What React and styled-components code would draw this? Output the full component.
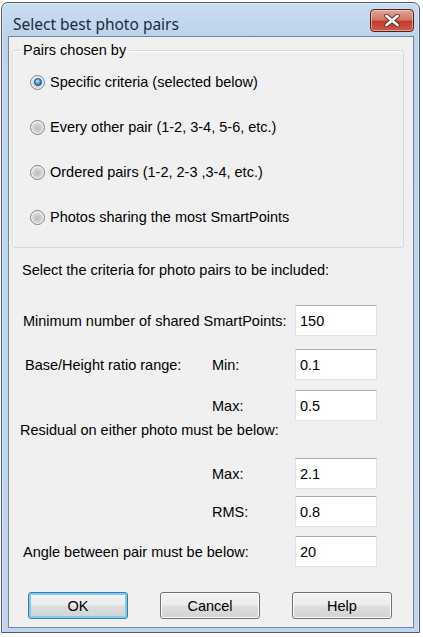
import React from 'react';
import styled, { createGlobalStyle } from 'styled-components';

const GlobalStyle = createGlobalStyle`
    html, body {
        margin: 0;
        padding: 0;
        background: #ffffff;
    }
    body {
        font-family: 'Liberation Sans', Arial, sans-serif;
        font-size: 14.5px;
        color: #000;
    }
`;

export default function App() {

    const choices = [
        'Specific criteria (selected below)',
        'Every other pair (1-2, 3-4, 5-6, etc.)',
        'Ordered pairs (1-2, 2-3 ,3-4, etc.)',
        'Photos sharing the most SmartPoints',
    ];

    return (
        <>
            <GlobalStyle />
            <Window>
                <TitleBar>
                    <Title>Select best photo pairs</Title>
                    <CloseButton>
                        <svg width="20" height="13" viewBox="0 0 20 13">
                            <path d="M4.5 2 L15.5 11 M15.5 2 L4.5 11" stroke="#5a2a24" strokeWidth="4.6" strokeLinecap="round" />
                            <path d="M4.5 2 L15.5 11 M15.5 2 L4.5 11" stroke="#ffffff" strokeWidth="2.8" strokeLinecap="round" />
                        </svg>
                    </CloseButton>
                </TitleBar>
                <Client>
                    <GroupBox>
                        <Legend>Pairs chosen by</Legend>
                        {choices.map((c, i) => (
                            <RadioRow key={c}>
                                <Radio $checked={i === 0} />
                                <span>{c}</span>
                            </RadioRow>
                        ))}
                    </GroupBox>

                    <Caption>Select the criteria for photo pairs to be included:</Caption>

                    <FormRow $top={27}>
                        <Label $span>Minimum number of shared SmartPoints:</Label>
                        <Field defaultValue="150" />
                    </FormRow>
                    <FormRow $top={14}>
                        <Label $indent={2}>Base/Height ratio range:</Label>
                        <Label>Min:</Label>
                        <Field defaultValue="0.1" />
                    </FormRow>
                    <FormRow $top={11}>
                        <span />
                        <Label>Max:</Label>
                        <Field defaultValue="0.5" />
                    </FormRow>

                    <SubCaption>Residual on either photo must be below:</SubCaption>

                    <FormRow $top={20}>
                        <span />
                        <Label>Max:</Label>
                        <Field defaultValue="2.1" />
                    </FormRow>
                    <FormRow $top={8}>
                        <span />
                        <Label>RMS:</Label>
                        <Field defaultValue="0.8" />
                    </FormRow>
                    <FormRow $top={10}>
                        <Label $span>Angle between pair must be below:</Label>
                        <Field defaultValue="20" />
                    </FormRow>

                    <ButtonBar>
                        <Button $default>OK</Button>
                        <Button>Cancel</Button>
                        <Button>Help</Button>
                    </ButtonBar>
                </Client>
            </Window>
        </>
    );
}

const Window = styled.div`
    margin: 2px 0 0 1px;
    width: 419px;
    height: 631px;
    box-sizing: border-box;
    border: 1px solid #4f5966;
    border-radius: 7px 7px 0 0;
    background: linear-gradient(#cadcf0 0px, #bcd3eb 34px, #c1d6ed 100%);
    box-shadow: inset 0 1px 0 #e4eef9, inset 1px 0 0 #dbe7f5, inset -1px 0 0 #dbe7f5;
    display: flex;
    flex-direction: column;
`;

const TitleBar = styled.div`
    height: 33px;
    flex: none;
    display: flex;
    justify-content: space-between;
    align-items: flex-start;
`;

const Title = styled.div`
    padding: 11px 0 0 11px;
    font-family: 'Noto Sans', 'Open Sans', sans-serif;
    font-size: 15.5px;
    line-height: 20px;
    color: #1b2a3e;
`;

const CloseButton = styled.div`
    margin: 6px 5px 0 0;
    width: 44px;
    height: 23px;
    box-sizing: border-box;
    border: 1px solid #50231e;
    border-radius: 4px;
    background: linear-gradient(#e3a293 0%, #d47a68 45%, #bf3e2d 55%, #cc5a44 100%);
    box-shadow: inset 0 0 0 1px rgba(255, 220, 210, 0.55);
    display: flex;
    align-items: center;
    justify-content: center;
`;

const Client = styled.div`
    flex: 1;
    margin: 0 5px 4px 6px;
    border: 1px solid #73849a;
    background: #f0f0f0;
    display: flex;
    flex-direction: column;
    align-items: flex-start;
`;

const GroupBox = styled.fieldset`
    margin: 5px 0 0 3px;
    padding: 13px 0 19px 17px;
    width: 392px;
    box-sizing: border-box;
    border: 1px solid #cfd9df;
    border-radius: 3px;
    box-shadow: inset 1px 1px 0 #ffffff;
    display: flex;
    flex-direction: column;
    gap: 23px;
    min-width: 0;
`;

const Legend = styled.legend`
    margin-left: -10px;
    padding: 0 3px;
    line-height: 16px;
    font-size: 14.5px;
`;

const RadioRow = styled.label`
    display: flex;
    align-items: center;
    gap: 5px;
    height: 22px;
    line-height: 16px;
`;

const Radio = styled.span`
    width: 15px;
    height: 15px;
    box-sizing: border-box;
    border-radius: 50%;
    border: 1px solid #7d8083;
    background: radial-gradient(circle at 50% 55%, #b9bcc0 0%, #d2d4d6 45%, #ececec 70%, #f8f8f8 100%);
    box-shadow: inset 0 0 0 1px #f2f2f2;
    flex: none;
    display: flex;
    align-items: center;
    justify-content: center;

    &::after {
        content: '';
        display: ${p => (p.$checked ? 'block' : 'none')};
        width: 8px;
        height: 8px;
        box-sizing: border-box;
        border-radius: 50%;
        border: 1px solid #1d4f8c;
        background: radial-gradient(circle at 40% 35%, #c4ecff 0%, #4aa3e6 45%, #1c5aa3 100%);
    }
`;

const Caption = styled.div`
    margin: 14px 0 0 13px;
    line-height: 16px;
`;

const SubCaption = styled.div`
    margin: 2px 0 0 11px;
    line-height: 16px;
`;

const FormRow = styled.div`
    margin: ${p => p.$top}px 0 0 14px;
    height: 30px;
    display: grid;
    grid-template-columns: 189px 83px 82px;
    align-items: center;
`;

const Label = styled.span`
    grid-column: ${p => (p.$span ? 'span 2' : 'auto')};
    padding-left: ${p => p.$indent || 0}px;
    line-height: 16px;
    white-space: nowrap;
`;

const Field = styled.input`
    grid-column: 3;
    width: 82px;
    height: 31px;
    box-sizing: border-box;
    padding: 0 4px;
    border: 1px solid #dfe3e8;
    border-top-color: #abadb3;
    background: #ffffff;
    font-family: 'Liberation Sans', Arial, sans-serif;
    font-size: 14.5px;
    color: #000;
    outline: none;
`;

const ButtonBar = styled.div`
    margin: 26px 0 0 19px;
    display: flex;
    gap: 32px;
`;

const Button = styled.button`
    width: 100px;
    height: 27px;
    box-sizing: border-box;
    border: 1px solid ${p => (p.$default ? '#3a7ab0' : '#707070')};
    border-radius: 3px;
    background: linear-gradient(#f3f3f3 0%, #ececec 48%, #dedede 52%, #d2d2d2 100%);
    box-shadow: ${p => (p.$default ? 'inset 0 0 0 2px #7dcdf0' : 'inset 0 0 0 1px #fbfbfb')};
    font-family: 'Liberation Sans', Arial, sans-serif;
    font-size: 14.5px;
    color: #000;
    padding: 0;
`;
